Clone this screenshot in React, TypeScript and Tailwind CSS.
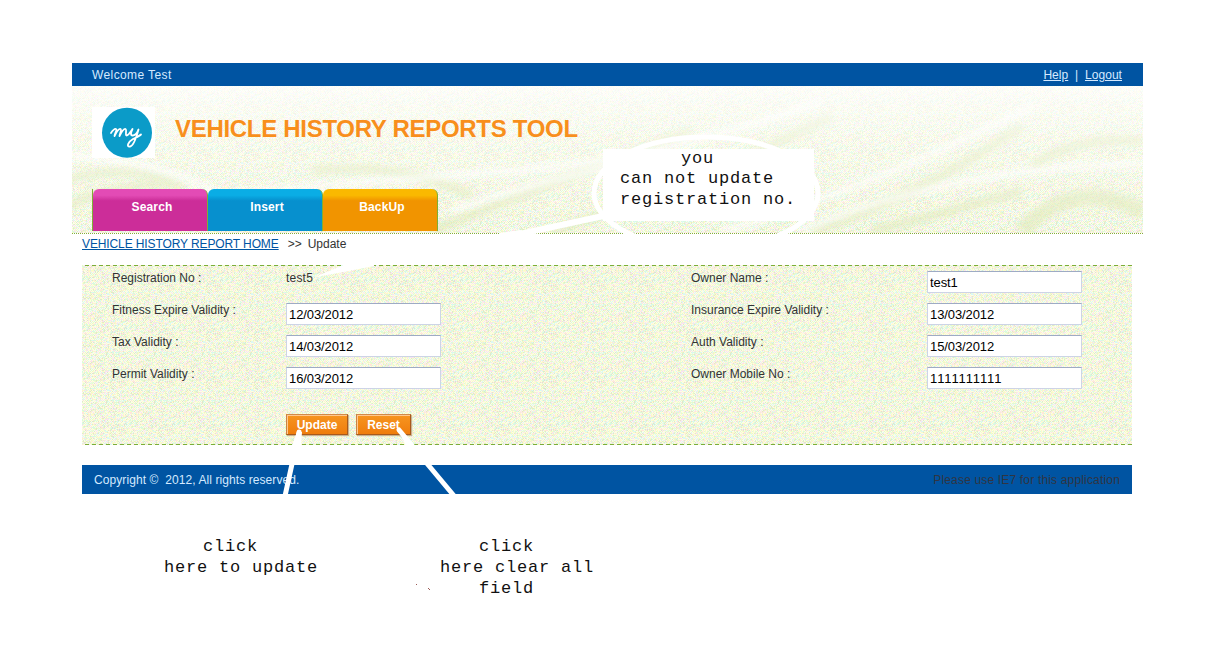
import React from "react";

const pastels = ["#fffbd2", "#fcfac8", "#d8fae0", "#ffe6da", "#daf8f4", "#dfe8cb", "#f8e2f4", "#e8fac8"];

type Dot = { x: number; y: number; fill: string };

function makeDots(size: number, seed: number, density: number): Dot[] {
  let s = seed;
  const next = () => {
    s = (s * 1664525 + 1013904223) % 4294967296;
    return s / 4294967296;
  };
  const dots: Dot[] = [];
  for (let y = 0; y < size; y++) {
    for (let x = 0; x < size; x++) {
      const r = next();
      const c = next();
      const limit = (x + y) % 2 === 0 ? density : density * 0.5;
      if (r < limit) dots.push({ x, y, fill: pastels[Math.floor(c * pastels.length)] });
    }
  }
  return dots;
}

const grain = makeDots(48, 7, 0.95);

function Grain({ id }: { id: string }) {
  return (
    <pattern id={id} width="48" height="48" patternUnits="userSpaceOnUse">
      {grain.map((d, i) => (
        <rect key={i} x={d.x} y={d.y} width="1" height="1" fill={d.fill} shapeRendering="crispEdges" />
      ))}
    </pattern>
  );
}

function HeaderArt() {
  return (
    <svg className="absolute inset-0 -z-10" width="1071" height="147" aria-hidden="true">
      <defs>
        <Grain id="headerGrain" />
        <linearGradient id="fade" x1="0" y1="0" x2="0" y2="1">
          <stop offset="0" stopColor="#fff" stopOpacity="0.8" />
          <stop offset="0.35" stopColor="#fff" stopOpacity="0.4" />
          <stop offset="1" stopColor="#fff" stopOpacity="0" />
        </linearGradient>
        <filter id="soft" x="-20%" y="-20%" width="140%" height="140%">
          <feGaussianBlur stdDeviation="3" />
        </filter>
      </defs>
      <rect width="1071" height="147" fill="#fbfdf0" />
      <rect width="1071" height="147" fill="url(#headerGrain)" />
      <g fill="none" stroke="#dfe9b8" strokeWidth="9" opacity="0.6" filter="url(#soft)">
        <path d="M-10 95Q60 75 110 100" />
        <path d="M-10 125Q30 95 110 100" />
        <path d="M240 85Q330 75 400 110" />
        <path d="M360 145Q480 95 620 45" />
        <path d="M480 145Q620 100 760 30" />
        <path d="M740 145Q850 110 950 40" />
        <path d="M800 145Q860 130 950 105" />
        <path d="M950 145Q1000 90 1071 125" strokeWidth="16" />
        <path d="M960 80Q1000 50 1071 55" />
      </g>
      <g fill="none" stroke="#fff" strokeWidth="6" opacity="0.75" filter="url(#soft)">
        <path d="M0 70Q90 75 150 110" />
        <path d="M130 110Q300 95 440 85T750 15" />
        <path d="M380 125Q450 100 560 75" />
        <path d="M650 145Q780 110 960 20" />
        <path d="M730 145Q880 80 1071 78" />
      </g>
      <rect width="1071" height="147" fill="url(#fade)" />
    </svg>
  );
}

function Logo() {
  return (
    <svg width="63" height="51" viewBox="0 0 63 51" role="img" aria-label="my">
      <rect width="63" height="51" fill="#fff" />
      <circle cx="35" cy="25.7" r="25" fill="#0b9bc8" />
      <g fill="none" stroke="#fff" strokeWidth="1.8" strokeLinecap="round" strokeLinejoin="round">
        <path d="M19 26C21 23 23 21.500 24 22C25.500 22.500 23 26 22.500 29C24.500 25 27 21.500 28.500 22C30 22.500 28 26 27.500 29C29.500 25 32 21.500 33.500 22C35 22.500 33 28 34.500 28.500C37 28.500 39 24 40.500 22C38.500 26 38.500 28.500 40.500 28.500C43 28.500 45.500 25 46.500 22.500C45 28 42 39 38 39.500C34 40 36 35 41 32C45 30 47.500 29 49 27.500" />
      </g>
    </svg>
  );
}

function Tab({ label, tone }: { label: string; tone: string }) {
  return (
    <a href="#" className={`flex h-[42px] w-[115px] justify-center rounded-t-[6px] border-r border-r-[#7fae35] pt-[9px] pl-[4px] text-[12px] leading-[18px] font-bold tracking-[0.15px] text-white ${tone}`}>
      {label}
    </a>
  );
}

function TextField({ value }: { value: string }) {
  return (
    <input
      defaultValue={value}
      className="block h-[22px] w-[155px] border border-[#cdd4e6] border-t-[#9eabc4] bg-white px-[2px] pb-0 text-[13px] leading-[20px] tracking-[-0.1px] text-black outline-none [font-kerning:none]"
    />
  );
}

const rows = [
  ["Registration No :", "test5", "Owner Name :", "test1"],
  ["Fitness Expire Validity :", "12/03/2012", "Insurance Expire Validity :", "13/03/2012"],
  ["Tax Validity :", "14/03/2012", "Auth Validity :", "15/03/2012"],
  ["Permit Validity :", "16/03/2012", "Owner Mobile No :", "1111111111"],
];

function ActionButton({ label, size }: { label: string; size: string }) {
  return (
    <button className={`h-[21px] border border-[#a85a1c] border-t-[#d08a4a] border-l-[#c98245] bg-linear-to-b from-[#f7951f] to-[#ef7d0c] text-[12px] leading-[18px] font-bold text-white shadow-[inset_1px_1px_0_#ffc890,1px_1px_1px_#c9b290] ${size}`}>
      {label}
    </button>
  );
}

function Note({ lines, place }: { lines: string[]; place: string }) {
  return (
    <div className={`absolute font-['Liberation_Mono',monospace] text-[17px] leading-[21px] tracking-[0.8px] whitespace-pre text-[#111] ${place}`}>
      {lines.map((line) => (
        <div key={line}>{line}</div>
      ))}
    </div>
  );
}

export default function App() {
  return (
    <div className="relative h-[649px] w-[1218px] overflow-hidden bg-white pt-[63px] pl-[72px] font-['Liberation_Sans',Arial,sans-serif] text-[12px] text-[#333]">
      <div className="w-[1071px]">
        <div className="flex h-[23px] items-center justify-between bg-[#0054a2] pr-[21px] pl-[20px] text-[#d5eaff]">
          <span className="tracking-[0.4px]">Welcome Test</span>
          <span className="tracking-[0.05px] whitespace-pre">
            <a href="#" className="underline">Help</a>{"  |  "}<a href="#" className="underline">Logout</a>
          </span>
        </div>
        <header className="relative isolate flex h-[148px] flex-col justify-between border-b border-dotted border-[#86ad3a] pl-[20px]">
          <HeaderArt />
          <div className="flex pt-[21px]">
            <Logo />
            <h1 className="pt-[7px] pl-[20px] text-[24px] leading-[30px] font-bold tracking-[-0.3px] whitespace-nowrap text-[#f88f1c]">VEHICLE HISTORY REPORTS TOOL</h1>
          </div>
          <nav className="mb-[2px] flex w-[346px] border-l border-[#7fae35]">
            <Tab label="Search" tone="bg-linear-to-b from-[#e34bb5] from-15% to-[#cc2d99] to-28%" />
            <Tab label="Insert" tone="bg-linear-to-b from-[#0aade5] from-15% to-[#0790ce] to-28%" />
            <Tab label="BackUp" tone="bg-linear-to-b from-[#fab900] from-15% to-[#f19400] to-28%" />
          </nav>
        </header>
      </div>
      <div className="ml-[10px] w-[1050px]">
        <div className="flex h-[31px] pt-[2px] leading-[16px]">
          <a href="#" className="tracking-[-0.11px] text-[#0054a2] underline">VEHICLE HISTORY REPORT HOME</a>
          <span className="pl-[9px]">&gt;&gt;</span>
          <span className="pl-[6px]">Update</span>
        </div>
        <main className="relative isolate h-[180px] pt-[5px] pl-[30px]">
          <svg className="absolute inset-0 -z-10" width="1050" height="180" aria-hidden="true">
            <defs><Grain id="formGrain" /></defs>
            <rect width="1050" height="180" fill="#fbfde8" />
            <rect width="1050" height="180" fill="url(#formGrain)" />
            <path d="M3 0.500H1050M3 179.500H1050" stroke="#7cad38" strokeDasharray="4 3" />
          </svg>
          {rows.map(([a, b, c, d], i) => (
            <div key={a} className="grid h-[32px] grid-cols-[174px_405px_236px_155px] leading-[16px]">
              <label>{a}</label>
              <div className="pt-px">{i === 0 ? <span className="relative -top-px tracking-[0.2px]">{b}</span> : <TextField value={b} />}</div>
              <label>{c}</label>
              <div className="pt-px"><TextField value={d} /></div>
            </div>
          ))}
          <div className="flex gap-[8px] pt-[16px] pl-[174px]">
            <ActionButton label="Update" size="w-[62px]" />
            <ActionButton label="Reset" size="w-[55px]" />
          </div>
        </main>
        <footer className="mt-[20px] flex h-[29px] items-center justify-between bg-[#0054a2] pr-[12px] pl-[12px] text-[#d5eaff]">
          <span className="tracking-[0.08px] whitespace-pre">Copyright ©  2012, All rights reserved.</span>
          <span className="tracking-[0.17px] text-[#303542]">Please use IE7 for this application</span>
        </footer>
      </div>
      <svg className="pointer-events-none absolute top-0 left-0" width="1218" height="649" aria-hidden="true">
        <g fill="none" stroke="#fff">
          <ellipse cx="706" cy="193" rx="112" ry="56" strokeWidth="5" />
          <path d="M603 216L520 234" strokeWidth="6" />
          <path d="M299 432L285 496M399 430L455 497" strokeWidth="5" strokeLinecap="round" />
        </g>
        <path d="M603 149h211v72H603zM315 277L346 264H374V266Q345 272 315 277zM500 233l20-3 10 4h-30zM297 432l5 0-1 14h-9zM399 430l16 16h-9z" fill="#fff" />
      </svg>
      <Note lines={["you"]} place="top-[148px] left-[681px]" />
      <Note lines={["can not update"]} place="top-[168px] left-[620px]" />
      <Note lines={["registration no."]} place="top-[189px] left-[620px]" />
      <Note lines={["click"]} place="top-[536px] left-[203px]" />
      <Note lines={["here to update"]} place="top-[557px] left-[164px]" />
      <Note lines={["click"]} place="top-[536px] left-[479px]" />
      <Note lines={["here clear all"]} place="top-[557px] left-[440px]" />
      <Note lines={["field"]} place="top-[578px] left-[479px]" />
      <svg className="absolute top-[582px] left-[414px]" width="18" height="10" aria-hidden="true">
        <path d="M2 2h1v1h-1zM14 6h1v1h-1zM15 7h1v1h-1z" fill="#9b5a55" />
      </svg>
    </div>
  );
}
